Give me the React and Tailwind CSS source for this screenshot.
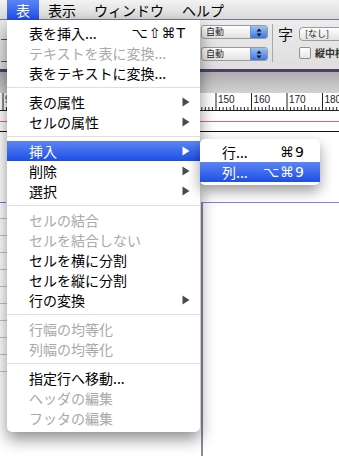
import React from 'react';

// Mac OS X (Leopard) style "表" menu open over a document window

function Tri({ white }) {
  return (
    <svg width="8" height="10" viewBox="0 0 8 10" className="shrink-0">
      <path d="M0.5 0.5L7.5 5L0.5 9.5Z" fill={white ? '#ffffff' : '#4a4a4a'} />
    </svg>
  );
}

function Item({ label, shortcut, arrow, disabled, active }) {
  const color = active ? 'text-white' : disabled ? 'text-[#a9a9a9]' : 'text-black';
  return (
    <div
      className={
        'flex items-center h-[20px] pl-[22px] pr-[10px] text-[14px] leading-none ' +
        color +
        (active ? ' bg-linear-to-b from-[#5d84f3] to-[#1d4de6]' : '')
      }
    >
      <span className="flex-1 whitespace-nowrap">{label}</span>
      {shortcut && (
        <span className="mr-[4px] font-['DejaVu_Sans','Noto_Sans_CJK_JP',sans-serif] text-[14px] tracking-[1px]">
          {shortcut}
        </span>
      )}
      {arrow && <Tri white={active} />}
    </div>
  );
}

function Sep() {
  return (
    <div className="h-[9px] flex items-center">
      <div className="h-px w-full bg-[#dedede]" />
    </div>
  );
}

function Popup({ text }) {
  return (
    <div className="flex w-[67px] h-[14px] rounded-[3px] border border-[#9b9b9b] bg-linear-to-b from-white to-[#e2e2e2] overflow-hidden">
      <span className="flex-1 pl-[4px] text-[9px] leading-[12px] text-[#222]">{text}</span>
      <div className="w-[17px] flex flex-col items-center justify-center bg-linear-to-b from-[#9cc0f5] to-[#3b77df] border-l border-[#6f8fc5]">
        <svg width="6" height="9" viewBox="0 0 6 9">
          <path d="M0.5 3.5L3 0.5L5.5 3.5Z" fill="#111" />
          <path d="M0.5 5.5L3 8.5L5.5 5.5Z" fill="#111" />
        </svg>
      </div>
    </div>
  );
}

function Ruler() {
  const unit = 3.55;
  const x = (v) => 216 + (v - 150) * unit;
  const ticks = [];
  for (let v = 88; v <= 186; v++) {
    const px = x(v);
    if (px < -2 || px > 341) continue;
    const h = v % 10 === 0 ? 17 : v % 5 === 0 ? 5 : 3;
    ticks.push(<line key={v} x1={px} x2={px} y1={17 - h} y2={17} stroke="#222" strokeWidth="1" />);
  }
  const labels = [90, 150, 160, 170, 180].map((v) => (
    <text key={v} x={x(v) + 2} y={10} fontSize="10" fill="#222" fontFamily="Liberation Sans, sans-serif">
      {v}
    </text>
  ));
  return (
    <svg width="339" height="17" viewBox="0 0 339 17" className="block">
      {ticks}
      {labels}
    </svg>
  );
}

export default function App() {
  return (
    <div className="relative w-[339px] h-[456px] overflow-hidden bg-white font-['Noto_Sans_CJK_JP','Liberation_Sans',sans-serif]">
      {/* Menu bar */}
      <div className="h-[20px] flex items-center bg-linear-to-b from-[#f3f3f3] to-[#d9d9d9] border-b border-[#7d7590] text-[14px] leading-none text-black">
        <div className="ml-[7px] h-[20px] px-[9px] flex items-center text-white bg-linear-to-b from-[#5d84f3] to-[#1d4de6]">表</div>
        <div className="px-[9px]">表示</div>
        <div className="px-[9px]">ウィンドウ</div>
        <div className="px-[9px]">ヘルプ</div>
      </div>

      {/* Toolbar */}
      <div className="h-[49px] flex bg-linear-to-b from-[#ececec] to-[#dedede]">
        <div className="w-[201px] shrink-0 flex flex-col gap-[10px] pt-[8px] pl-[1px]">
          <div className="w-[6px] h-[12px] border-b border-[#555]" />
          <div className="w-[6px] h-[12px] border-b border-[#555]" />
        </div>
        <div className="shrink-0 flex flex-col gap-[8px] pt-[5px]">
          <Popup text="自動" />
          <Popup text="自動" />
        </div>
        <div className="shrink-0 ml-[4px] mt-[4px] w-px h-[38px] bg-[#a8a8a8]" />
        <div className="shrink-0 ml-[5px] flex flex-col pt-[6px]">
          <div className="flex items-center gap-[6px]">
            <span className="text-[15px] leading-none text-[#111]">字</span>
            <div className="h-[14px] w-[60px] rounded-l-[4px] border border-[#9b9b9b] bg-linear-to-b from-white to-[#e2e2e2] pl-[5px] text-[9px] leading-[12px] text-[#222]">
              [なし]
            </div>
          </div>
          <div className="flex items-center gap-[4px] pl-[21px] mt-[6px]">
            <div className="w-[12px] h-[12px] rounded-[2px] border border-[#8f8f8f] bg-linear-to-b from-white to-[#e6e6e6]" />
            <span className="text-[10px] leading-none font-bold text-[#333] whitespace-nowrap">縦中横</span>
          </div>
        </div>
      </div>

      <div className="h-[3px] bg-[#4e3f63]" />
      <div className="h-[21px] bg-linear-to-b from-[#adadad] to-[#d2d2d2]" />
      <div className="bg-white border-b border-[#222]">
        <Ruler />
      </div>

      {/* Document */}
      <div className="h-[10px]" />
      <div className="h-px bg-[#e0646e]" />
      <div className="h-[9px]" />
      <div className="h-px bg-[#111]" />
      <div className="h-[70px]" />
      <div className="flex h-[300px]">
        <div className="w-[201px] flex flex-col">
          <div className="w-[6px] h-px bg-[#6f78e8]" />
          <div className="flex flex-col gap-[16px] pt-[15px]">
            {[0, 1, 2, 3, 4, 5, 6, 7, 8, 9].map((i) => (
              <div key={i} className="w-[7px] h-px bg-[#c4c4c4]" />
            ))}
          </div>
        </div>
        <div className="flex-1 border-l-[2px] border-l-[#8e8a9c] border-t border-t-[#7c84f0]" />
      </div>

      {/* Open menu */}
      <div className="absolute left-[7px] top-[20px] w-[193px] pt-[3px] pb-[4px] bg-white rounded-b-[5px] shadow-[0_7px_16px_rgba(0,0,0,0.45)]">
        <Item label="表を挿入..." shortcut="⌥⇧⌘T" />
        <Item label="テキストを表に変換..." disabled />
        <Item label="表をテキストに変換..." />
        <Sep />
        <Item label="表の属性" arrow />
        <Item label="セルの属性" arrow />
        <Sep />
        <Item label="挿入" arrow active />
        <Item label="削除" arrow />
        <Item label="選択" arrow />
        <Sep />
        <Item label="セルの結合" disabled />
        <Item label="セルを結合しない" disabled />
        <Item label="セルを横に分割" />
        <Item label="セルを縦に分割" />
        <Item label="行の変換" arrow />
        <Sep />
        <Item label="行幅の均等化" disabled />
        <Item label="列幅の均等化" disabled />
        <Sep />
        <Item label="指定行へ移動..." />
        <Item label="ヘッダの編集" disabled />
        <Item label="フッタの編集" disabled />
      </div>

      {/* Submenu */}
      <div className="absolute left-[200px] top-[139px] w-[120px] py-[3px] bg-white rounded-[5px] shadow-[0_6px_14px_rgba(0,0,0,0.4)]">
        <div className="flex items-center h-[20px] pl-[22px] pr-[15px] text-[14px] leading-none text-black">
          <span className="flex-1">行...</span>
          <span className="font-['DejaVu_Sans',sans-serif] tracking-[1px]">⌘9</span>
        </div>
        <div className="flex items-center h-[20px] pl-[22px] pr-[15px] text-[14px] leading-none text-white bg-linear-to-b from-[#5d84f3] to-[#1d4de6]">
          <span className="flex-1">列...</span>
          <span className="font-['DejaVu_Sans',sans-serif] tracking-[1px]">⌥⌘9</span>
        </div>
      </div>
    </div>
  );
}
